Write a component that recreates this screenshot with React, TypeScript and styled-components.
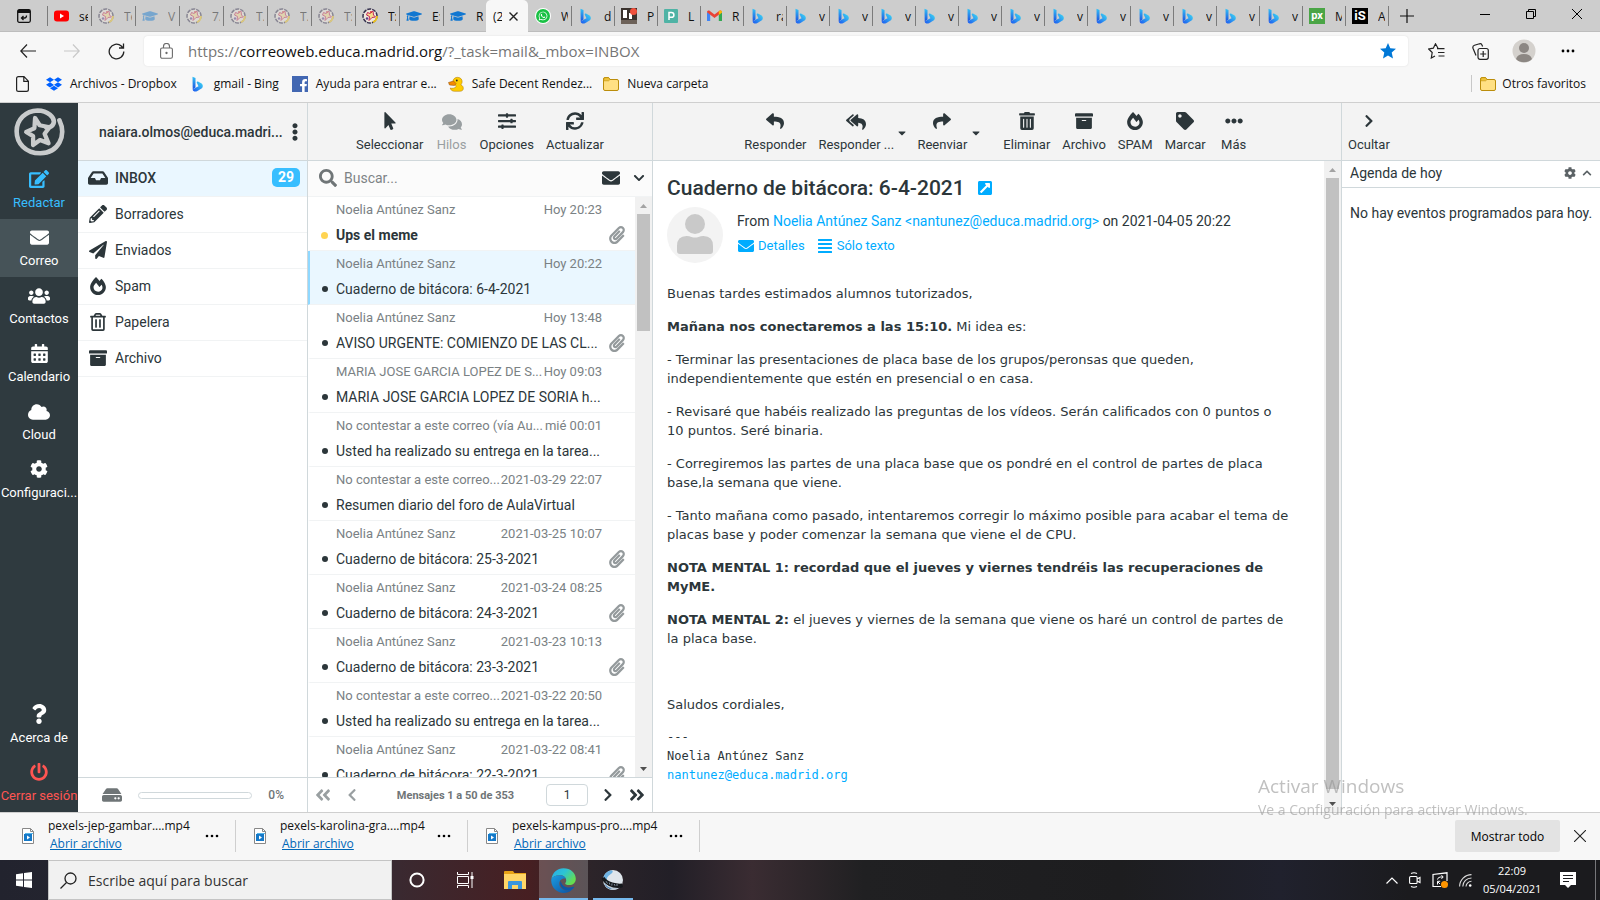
import React from "react";
import styled, { createGlobalStyle } from "styled-components";
import {
  FaEdit, FaEnvelope, FaUsers, FaCalendarAlt, FaCloud, FaCog, FaQuestion, FaPowerOff, FaInbox,
  FaPencilAlt, FaPaperPlane, FaFireAlt, FaRegTrashAlt, FaTrashAlt, FaArchive, FaComments,
  FaMousePointer, FaSlidersH, FaSync, FaSearch, FaChevronDown, FaChevronUp, FaChevronRight,
  FaChevronLeft, FaPaperclip, FaReply, FaReplyAll, FaShare, FaCaretDown, FaTag, FaEllipsisH,
  FaEllipsisV, FaExternalLinkSquareAlt, FaAlignJustify, FaHdd, FaAngleDoubleLeft,
  FaAngleDoubleRight, FaFacebookF, FaWhatsapp, FaDropbox, FaGraduationCap,
} from "react-icons/fa";

const ui = `"Open Sans", "Noto Sans", sans-serif`;
const roboto = `Roboto, "Liberation Sans", sans-serif`;
const line = "#d0d8db";
const soft = "#f1f3f4";
const ink = "#2c363a";
const blue = "#00acff";

const Global = createGlobalStyle`
  *, *::before, *::after { box-sizing: border-box; }
  body { margin: 0; background: #fff; }
  button, input { font: inherit; color: inherit; }
  button { background: none; border: 0; padding: 0; margin: 0; }
  a { text-decoration: none; color: inherit; }
  ul { list-style: none; margin: 0; padding: 0; }
  svg { display: block; flex: none; }
`;

const Screen = styled.div`
  height: 100vh;
  display: flex;
  flex-direction: column;
  overflow: hidden;
  font-family: ${ui};
  font-size: 12px;
  color: #111;
`;

/* ---------- browser chrome ---------- */

const TabStrip = styled.div`
  display: flex;
  height: 32px;
  background: #cdcdcd;
  border-bottom: 1px solid #bdbdbd;
`;
const TabActions = styled.button`
  width: 47px;
  display: grid;
  place-items: center;
`;
const Tab = styled.button<{ $wide?: boolean; $faded?: boolean; $bare?: boolean }>`
  width: ${(p) => (p.$wide ? 44 : 43)}px;
  height: 32px;
  display: flex;
  align-items: center;
  gap: 10px;
  padding: 0 3px 0 7px;
  overflow: hidden;
  position: relative;
  text-align: left;
  &::before {
    content: "";
    display: ${(p) => (p.$bare ? "none" : "block")};
    position: absolute;
    left: 0;
    top: 6px;
    height: 20px;
    width: 1px;
    background: #7b7b7b;
  }
  > * { opacity: ${(p) => (p.$faded ? 0.45 : 1)}; }
`;
const TabTitle = styled.span`
  flex: 1;
  min-width: 0;
  overflow: hidden;
  white-space: nowrap;
`;
const ActiveTab = styled.div`
  width: 42px;
  height: 32px;
  background: #f7f7f7;
  border-radius: 5px 5px 0 0;
  display: flex;
  align-items: center;
  gap: 7px;
  padding: 0 10px 0 7px;
`;
const TabEnd = styled.div`
  width: 1px;
  height: 20px;
  margin-top: 6px;
  background: #7b7b7b;
`;
const WindowControls = styled.div`
  margin-left: auto;
  display: flex;
  height: 28px;
`;
const WindowButton = styled.button`
  width: 46px;
  display: grid;
  place-items: center;
`;
const NewTab = styled.button`
  width: 36px;
  display: grid;
  place-items: center;
`;
const NavBar = styled.div`
  display: flex;
  align-items: center;
  height: 38px;
  background: #f7f7f7;
  padding: 0 6px;
`;
const NavButton = styled.button`
  width: 44px;
  height: 30px;
  display: grid;
  place-items: center;
`;
const Address = styled.label`
  flex: 1;
  margin: 0 6px;
  height: 30px;
  background: #fff;
  border-radius: 4px;
  box-shadow: 0 0 2px #ddd;
  display: flex;
  align-items: center;
  padding: 0 12px 0 16px;
  gap: 15px;
`;
const Url = styled.span`
  flex: 1;
  font-size: 15px;
  color: #767676;
  b { font-weight: 400; color: #111; }
`;
const NavEnd = styled.div`
  display: flex;
  padding-right: 4px;
`;
const Favorites = styled.nav`
  display: flex;
  align-items: center;
  height: 33px;
  background: #f7f7f7;
  border-bottom: 1px solid #cfcfcf;
  padding: 0 14px 5px 16px;
`;
const Favorite = styled.a<{ $gap: number }>`
  display: flex;
  align-items: center;
  gap: 8px;
  margin-right: ${(p) => p.$gap}px;
  white-space: nowrap;
`;
const OtherFavorites = styled(Favorite)`
  margin-left: auto;
  padding-left: 8px;
  border-left: 1px solid #c8c8c8;
  gap: 6px;
`;

/* ---------- mail application ---------- */

const Mail = styled.main`
  flex: 1;
  min-height: 0;
  display: grid;
  grid-template-columns: 78px 230px 345px minmax(0, 1fr) 258px;
  font-family: ${roboto};
  font-size: 14px;
  color: ${ink};
  background: #fff;
`;
const TaskMenu = styled.nav`
  background: #2f3a3f;
  display: flex;
  flex-direction: column;
`;
const Logo = styled.div`
  height: 58px;
  display: grid;
  place-items: center;
`;
const Task = styled.button<{ $tone?: string; $active?: boolean; $last?: boolean }>`
  height: 58px;
  display: flex;
  flex-direction: column;
  align-items: center;
  padding-top: 8px;
  gap: 5px;
  font-size: 13px;
  line-height: 18px;
  white-space: nowrap;
  color: ${(p) => p.$tone || "#fff"};
  background: ${(p) => (p.$active ? "#465358" : "transparent")};
  margin-top: ${(p) => (p.$last ? "auto" : "0")};
`;
const TaskIcon = styled.span`
  height: 20px;
  display: grid;
  place-items: center;
  font-size: 20px;
`;
const Column = styled.section`
  display: flex;
  flex-direction: column;
  min-width: 0;
  min-height: 0;
  border-right: 1px solid ${line};
  &:last-child { border-right: 0; }
`;
const Header = styled.header`
  flex: none;
  height: 58px;
  background: #f3f3f3;
  border-bottom: 1px solid ${line};
  display: flex;
  align-items: center;
`;
const Account = styled(Header)`
  padding: 0 3px 0 21px;
  justify-content: space-between;
  font-weight: 500;
`;
const Tools = styled(Header)<{ $left?: boolean }>`
  justify-content: ${(p) => (p.$left ? "flex-start" : "center")};
  padding-top: 2px;
  font-size: 13px;
`;
const Tool = styled.button<{ $muted?: boolean; $split?: boolean }>`
  min-width: 32px;
  width: ${(p) => (p.$split ? "75px" : "auto")};
  margin: 0 6px;
  display: flex;
  flex-direction: column;
  align-items: center;
  gap: 5px;
  line-height: 18px;
  white-space: nowrap;
  color: ${(p) => (p.$muted ? "#999fa1" : ink)};
  > span:last-child { align-self: ${(p) => (p.$split ? "flex-start" : "center")}; }
`;
const ToolIcon = styled.span`
  height: 19px;
  display: grid;
  place-items: center;
  font-size: 18px;
`;
const Split = styled.div<{ $end?: boolean }>`
  display: flex;
  margin-right: ${(p) => (p.$end ? 12 : 0)}px;
  ${Tool} { margin-right: 0; }
`;
const Caret = styled.button`
  width: 18px;
  height: 42px;
  display: grid;
  place-items: center;
  font-size: 12px;
`;
const Folder = styled.a<{ $active?: boolean }>`
  height: 36px;
  display: flex;
  align-items: center;
  padding: 0 7px 2px 9px;
  gap: 7px;
  border-bottom: 1px solid ${soft};
  background: ${(p) => (p.$active ? "#eaf7ff" : "#fff")};
  font-weight: ${(p) => (p.$active ? 500 : 400)};
`;
const FolderIcon = styled.span`
  width: 21px;
  display: grid;
  place-items: center;
  font-size: 18px;
`;
const Badge = styled.span`
  margin-left: auto;
  width: 28px;
  height: 19px;
  border-radius: 5px;
  background: #37beff;
  color: #fff;
  font-weight: 700;
  line-height: 19px;
  text-align: center;
`;
const Footer = styled.footer`
  flex: none;
  height: 35px;
  margin-top: auto;
  border-top: 1px solid ${line};
  display: flex;
  align-items: center;
  font-size: 11px;
  font-weight: 700;
  color: #6f7577;
`;
const Quota = styled(Footer)`
  padding: 0 23px 0 24px;
  gap: 16px;
  justify-content: space-between;
  font-size: 12px;
  font-weight: 500;
`;
const QuotaBar = styled.div`
  flex: 1;
  height: 7px;
  border: 1px solid ${line};
  border-radius: 4px;
`;
const SearchRow = styled.label`
  flex: none;
  height: 36px;
  display: flex;
  align-items: center;
  padding: 0 7px 1px 11px;
  gap: 7px;
  background: #fbfbfb;
  border-bottom: 1px solid ${soft};
  color: ${ink};
`;
const SearchInput = styled.input`
  flex: 1;
  min-width: 0;
  border: 0;
  padding: 0;
  background: transparent;
  outline: 0;
  &::placeholder { color: #7d8386; opacity: 1; }
`;
const Plain = styled.button`
  display: grid;
  place-items: center;
`;
const ListArea = styled.div`
  flex: 1;
  min-height: 0;
  display: flex;
`;
const MessageList = styled.ul`
  flex: 1;
  min-width: 0;
  overflow: hidden;
`;
const MessageRow = styled.li<{ $selected?: boolean }>`
  height: 54px;
  display: grid;
  grid-template-columns: 26px minmax(0, 1fr) 33px;
  grid-template-rows: 24px 28px;
  align-items: center;
  border-bottom: 1px solid ${soft};
  border-left: 2px solid ${(p) => (p.$selected ? "#8fd8ff" : "transparent")};
  background: ${(p) => (p.$selected ? "#eaf7ff" : "#fff")};
`;
const Meta = styled.div`
  grid-column: 2;
  display: flex;
  justify-content: space-between;
  font-size: 13px;
  color: #7a8184;
  white-space: nowrap;
`;
const Dot = styled.span<{ $unread?: boolean }>`
  justify-self: end;
  width: ${(p) => (p.$unread ? 7 : 6)}px;
  height: ${(p) => (p.$unread ? 7 : 6)}px;
  margin-right: 8px;
  border-radius: 50%;
  background: ${(p) => (p.$unread ? "#ffd452" : ink)};
`;
const SubjectLink = styled.a<{ $unread?: boolean }>`
  white-space: nowrap;
  font-weight: ${(p) => (p.$unread ? 700 : 400)};
`;
const Clip = styled.span`
  margin-left: 6px;
  color: #949a9c;
  font-size: 18px;
`;
const Scrollbar = styled.div`
  flex: none;
  width: 17px;
  background: #f1f1f1;
  display: flex;
  flex-direction: column;
  align-items: center;
`;
const ScrollArrow = styled.span<{ $down?: boolean }>`
  height: 17px;
  display: grid;
  place-items: center;
  margin-top: ${(p) => (p.$down ? "auto" : "0")};
  color: ${(p) => (p.$down ? "#505050" : "#a3a3a3")};
`;
const Thumb = styled.div<{ $share: string }>`
  width: 13px;
  height: ${(p) => p.$share};
  background: #c1c1c1;
`;
const Pager = styled(Footer)`
  padding: 0 6px;
  button { color: ${ink}; }
  button:disabled { color: #999fa1; }
`;
const PagerText = styled.span`
  flex: 1;
  padding-left: 6px;
  text-align: center;
  white-space: nowrap;
`;
const IconGroup = styled.div`
  display: flex;
  align-items: center;
  gap: 13px;
`;
const PageInput = styled.input`
  width: 42px;
  height: 22px;
  border: 1px solid ${line};
  border-radius: 4px;
  text-align: center;
  font-size: 12px;
  font-weight: 400;
  color: ${ink};
  padding: 0;
`;
const Reader = styled.article`
  flex: 1;
  min-width: 0;
  padding: 13px 14px 0;
`;
const Subject = styled.h1`
  display: flex;
  align-items: center;
  gap: 12px;
  margin: 0 0 5px;
  font-size: 21px;
  line-height: 28px;
  font-weight: 500;
  svg { font-size: 16px; color: ${blue}; }
`;
const Envelope = styled.div`
  display: flex;
  gap: 14px;
  margin-bottom: 21px;
  a { color: ${blue}; }
`;
const From = styled.div`
  line-height: 20px;
  padding-top: 4px;
`;
const Links = styled.div`
  display: flex;
  gap: 12px;
  margin-top: 6px;
  padding-left: 1px;
  font-size: 13px;
  line-height: 18px;
  a { display: flex; align-items: center; gap: 4px; }
  svg { font-size: 16px; }
`;
const Body = styled.div`
  font-family: "DejaVu Sans", sans-serif;
  font-size: 13px;
  line-height: 19px;
  p { margin: 0 0 14px; min-height: 19px; }
`;
const Signature = styled.div`
  font-family: "DejaVu Sans Mono", monospace;
  font-size: 12px;
  line-height: 19px;
  a { color: ${blue}; display: block; }
`;
const AgendaTitle = styled.div`
  height: 27px;
  display: flex;
  align-items: center;
  gap: 6px;
  padding: 0 8px 2px;
  border-bottom: 1px solid ${line};
  color: #5b6265;
  h2 { flex: 1; margin: 0; font-size: 14px; font-weight: 400; color: ${ink}; }
`;
const AgendaText = styled.p`
  margin: 0;
  padding: 15px 0 15px 8px;
  line-height: 20px;
`;

/* ---------- downloads and taskbar ---------- */

const Downloads = styled.div`
  flex: none;
  height: 48px;
  display: flex;
  align-items: center;
  background: #f7f7f7;
  border-top: 1px solid #cfcfcf;
  padding: 0 14px 1px 4px;
`;
const Download = styled.div`
  width: 232px;
  height: 32px;
  display: flex;
  align-items: center;
  padding: 0 16px 0 18px;
  gap: 14px;
  border-right: 1px solid #cfcfcf;
`;
const DownloadText = styled.div`
  flex: 1;
  min-width: 0;
  padding-bottom: 2px;
  line-height: 18px;
  white-space: nowrap;
  a { color: #0067b8; text-decoration: underline; padding-left: 2px; }
`;
const ShowAll = styled.button`
  margin-left: auto;
  margin-right: 14px;
  width: 105px;
  height: 32px;
  border-radius: 2px;
  background: #e3e3e3;
  color: #000;
  font-weight: 500;
`;
const Taskbar = styled.div`
  flex: none;
  height: 40px;
  display: flex;
  color: #fff;
  background: linear-gradient(90deg, #22232e 0%, #2a2731 20%, #3a2930 25%, #471f22 33%, #2c2429 37%, #221f27 42%, #3a2c32 47%, #202022 54%, #1d1d1f 70%, #20212d 80%, #1b1b1e 88%, #1b1b1e 100%);
`;
const TaskButton = styled.button<{ $active?: boolean; $running?: string }>`
  width: 49px;
  height: 40px;
  display: grid;
  place-items: center;
  background-color: ${(p) => (p.$active ? "rgba(255, 255, 255, 0.22)" : "transparent")};
  background-image: ${(p) => (p.$running ? "linear-gradient(#76b9ed, #76b9ed)" : "none")};
  background-repeat: no-repeat;
  background-position: bottom;
  background-size: ${(p) => p.$running || "0"} 2px;
`;
const StartButton = styled(TaskButton)`
  width: 48px;
`;
const SystemSearch = styled.label`
  width: 344px;
  background: #f1f1f1;
  border: 1px solid #c4c4c4;
  display: flex;
  align-items: center;
  gap: 11px;
  padding: 0 11px;
  color: #222;
`;
const SystemInput = styled.input`
  flex: 1;
  min-width: 0;
  border: 0;
  padding: 0;
  background: none;
  font-size: 14px;
  &::placeholder { color: #333; opacity: 1; }
`;
const Tray = styled.div`
  margin-left: auto;
  display: flex;
  align-items: center;
  gap: 11px;
  padding-right: 4px;
`;
const Clock = styled.time`
  width: 58px;
  margin-right: 8px;
  font-size: 11px;
  line-height: 18px;
  text-align: center;
`;
const DesktopEdge = styled.span`
  width: 1px;
  height: 40px;
  margin-left: 8px;
  background: #77777a;
`;
const Watermark = styled.aside`
  position: fixed;
  right: 66px;
  bottom: 80px;
  width: 276px;
  color: rgba(150, 150, 150, 0.6);
  font-size: 14px;
  line-height: 20px;
  white-space: nowrap;
  pointer-events: none;
  strong { display: block; font-size: 19px; line-height: 28px; font-weight: 400; }
`;

/* ---------- drawings ---------- */

const Bing = () => (
  <svg width="16" height="16" viewBox="0 0 16 16">
    <defs>
      <linearGradient id="bingA" x1="0" y1="0" x2="0" y2="1">
        <stop offset="0" stopColor="#35c1f5" /><stop offset="1" stopColor="#1b4fe0" />
      </linearGradient>
      <linearGradient id="bingB" x1="0" y1="1" x2="1" y2="0">
        <stop offset="0" stopColor="#1b56f0" /><stop offset="1" stopColor="#3fdcf2" />
      </linearGradient>
    </defs>
    <path d="M2.500.8 5.500 1.900v9.600L2.700 13.600z" fill="url(#bingA)" />
    <path d="M2.700 13.400 6.500 11.300l2-1-1.700-3.600c-.3-.9.3-1.500 1.200-1.100l3.200 1.600c1.800 1 2.200 3.500.7 5.100L7 15.200c-1.900 1-4.200.1-4.300-1.800z" fill="url(#bingB)" />
  </svg>
);
const Moodle = () => (
  <svg width="16" height="16" viewBox="0 0 16 16">
    <circle cx="8" cy="8" r="7" fill="#efe8dd" stroke="#34304e" strokeWidth="1.500" strokeDasharray="4 1" />
    <path d="M11 14.300A7 7 0 0 0 15 8" stroke="#f0c419" strokeWidth="1.800" fill="none" />
    <path d="m5.500 4.500 2.500 1 3-2.500.5 4 2 2-3.500.5L7 12.500l.5-4-3-1.500z" fill="#f7dc8a" stroke="#c2255c" strokeWidth="1" />
    <circle cx="5" cy="10.500" r="1.200" fill="#5a3d8a" />
    <circle cx="9" cy="4" r="1" fill="#d32f2f" />
  </svg>
);
const YouTube = () => (
  <svg width="15" height="16" viewBox="0 0 15 16"><rect y="2.500" width="15" height="11" rx="3" fill="#f00" /><path d="M6 5.500v5L10 8z" fill="#fff" /></svg>
);
const Cap = () => <FaGraduationCap size={16} color="#1177d1" />;
const WhatsApp = () => (
  <svg width="16" height="16" viewBox="0 0 16 16"><circle cx="8" cy="8" r="8" fill="#fff" /><circle cx="8" cy="8" r="7" fill="#19c144" /><FaWhatsapp x="3" y="3" size={10} color="#fff" /></svg>
);
const Photo = () => (
  <svg width="16" height="16" viewBox="0 0 16 16"><rect width="16" height="16" fill="#3a322d" /><path d="M2 2h4v8H2zM8 5h3v6H8z" fill="#fff" /><path d="M0 12h16v4H0z" fill="#6d6259" /><circle cx="12.500" cy="3.500" r="3.500" fill="#f0503c" /></svg>
);
const Pexel = () => (
  <svg width="14" height="16" viewBox="0 0 14 16"><rect y="1" width="14" height="14" rx="1" fill="#4fb3a5" /><path d="M5 12V4.500h2.500a2.400 2.400 0 0 1 0 4.800H5" fill="none" stroke="#fff" strokeWidth="1.500" /></svg>
);
const Gmail = () => (
  <svg width="15" height="16" viewBox="0 0 15 16">
    <path d="M0 4v9h3.200V6z" fill="#4285f4" /><path d="M15 4v9h-3.200V6z" fill="#34a853" />
    <path d="M0 4.200C0 2.700 1.700 2 2.900 2.900L7.500 6.500l4.600-3.600c1.200-.9 2.900-.2 2.900 1.300L7.500 10z" fill="#ea4335" />
    <path d="M11.800 3.200v3.700L15 4.400C15 2.700 13.300 2 11.800 3.200z" fill="#fbbc04" />
  </svg>
);
const TileIcon = styled.span<{ $bg: string; $size?: number }>`
  flex: none;
  width: 16px;
  height: 16px;
  background: ${(p) => p.$bg};
  color: #fff;
  font: 700 ${(p) => p.$size || 11}px/15px ${roboto};
  text-align: center;
`;
const FolderPic = () => (
  <svg width="16" height="14" viewBox="0 0 16 14"><path d="M.5 2Q.5.5 2 .5h3.500l1.500 2h7Q15.500 2.500 15.500 4v8q0 1.500-1.500 1.500H2Q.5 13.500.5 12z" fill="#ffe083" stroke="#bb8d0b" /><path d="M.8 3.800h4.700l1.500-1.300-1.300-1.800H2Q.8.800.8 2z" fill="#efc33a" stroke="#bb8d0b" strokeWidth=".6" /></svg>
);
const Duck = () => (
  <svg width="16" height="16" viewBox="0 0 16 16">
    <path d="M5 5.200C5.200 2.800 7.200 1.200 9.700 1.300c3 .1 4.800 2.400 4.400 5-.1 1-.7 1.800-1.200 2.500 1.600.8 2.500 2 2.400 3.700-.1 1.800-1.300 2.800-3.500 2.800H6.500c-2.300 0-3.700-1.200-4.300-3.300 2 .7 4.500.3 6-1.500z" fill="#fc0" stroke="#a87400" strokeWidth=".5" />
    <path d="M.5 6.500 5.500 5l2.500 2.500-1.500 2-5-.5z" fill="#f58a00" stroke="#8a4a00" strokeWidth=".5" />
    <circle cx="8.800" cy="4.500" r=".9" fill="#222" />
  </svg>
);
const PageIcon = () => (
  <svg width="13" height="16" viewBox="0 0 13 16" fill="none" stroke="#222" strokeWidth="1.200"><path d="M2.500.6H8l4.400 4.600v8.300q0 1.900-1.900 1.900h-8Q.6 15.400.6 13.500v-11Q.6.6 2.500.6zM7.800.8v4.600h4.400" /></svg>
);
const School = () => (
  <svg width="51" height="48" viewBox="40 25 155 145" fill="none" stroke="#c9cbcc" strokeLinecap="round" strokeLinejoin="round">
    <path d="M178 62C200 108 176 161 120 162 74 162 48 130 48 95 48 60 75 33 112 32c30 0 54 22 48 40-4 10-12 12-22 12" strokeWidth="14" />
    <path d="m104 55 14 22 30 6-15 20 12 29-26-10-21 15v-27l-21-13 25-11z" strokeWidth="13" />
  </svg>
);
const Avatar = () => (
  <svg width="56" height="56" viewBox="0 0 56 56"><circle cx="28" cy="28" r="28" fill="#f3f3f3" /><g fill="#c9c9c9"><circle cx="28" cy="17" r="10" /><path d="M10 44v-5q0-10 9.500-10 3 0 5 1 3.500 1 7 0 2-1 5-1Q46 29 46 39v5q0 3-3 3H13q-3 0-3-3z" /></g></svg>
);
const Triangle = ({ down }: { down?: boolean }) => (
  <svg width="7" height="4" viewBox="0 0 7 4"><path d={down ? "M0 0h7L3.500 4z" : "M0 4h7L3.500 0z"} fill="currentColor" /></svg>
);
const MediaFile = () => (
  <svg width="12" height="16" viewBox="0 0 12 16"><path d="M.5.5h8l3 3v12H.5z" fill="#fff" stroke="#888" /><path d="M8.500.5v3h3" fill="none" stroke="#888" /><path d="M3 5h8v1H3z" fill="#56b5ea" /><rect x="2" y="6" width="8" height="7" fill="#1579c8" /><path d="M5 7.500v4l3-2z" fill="#fff" /></svg>
);
const Explorer = () => (
  <svg width="22" height="18" viewBox="0 0 22 18"><path d="M0 1q0-1 1-1h8l1.500 2H22v16H0z" fill="#e8a317" /><path d="M0 3h22v15H0z" fill="#ffd667" /><path d="M4 18v-7q0-1 1-1h12q1 0 1 1v7h-4v-4H8v4z" fill="#3a96dd" /></svg>
);
const Edge = () => (
  <svg width="25" height="25" viewBox="0 0 24 24">
    <defs>
      <linearGradient id="edgeTop" x1="0" y1="0" x2="1" y2=".6"><stop offset="0" stopColor="#28a8ea" /><stop offset=".5" stopColor="#2cc4d4" /><stop offset="1" stopColor="#66dd4e" /></linearGradient>
      <linearGradient id="edgeLow" x1="0" y1="0" x2="1" y2="1"><stop offset="0" stopColor="#1b9de2" /><stop offset="1" stopColor="#0d4f9e" /></linearGradient>
    </defs>
    <path d="M.4 10.500C1.300 4.500 6 .2 12 .2 19 .2 23.800 5 23.800 10.200c0 3.800-2.800 6.200-6.400 6.200-2.600 0-3.800-.9-3.800-1.600 0-.6 1-1 1-2.900C14.600 9 12 7 8.500 7 4.500 7 1.500 8.500.4 10.500z" fill="url(#edgeTop)" />
    <path d="M.4 10.500C1.500 8.500 4.500 7 8.500 7c3 0 5 1.400 5.800 3.200-4-.8-6.300 1.700-6.300 4.800 0 4 4 7 8.500 6.300 2.500-.4 4-1.300 5.500-2.500C20 22 16.500 23.900 12.500 23.900 5.500 23.900.2 18.500.2 12z" fill="url(#edgeLow)" />
    <path d="M9.500 12c-1.800 3 0 7.500 4 9 3 1 6.500 0 8.600-2.300.4-.5 0-1-.6-.7-1.200.5-2.600.8-4 .8-4.500 0-8-3-8-6.800z" fill="#0b57a8" />
  </svg>
);
const Globe = () => (
  <svg width="23" height="22" viewBox="0 0 23 22">
    <circle cx="12" cy="11" r="10" fill="#dfe6ec" />
    <path d="M2 12Q2 3 10.500 1.200q3 1-1 4Q5 8 6 12z" fill="#6fb4e4" />
    <path d="M4 17q4 1 8 1 4 0 8-1-3 4-8 4t-8-4z" fill="#b9c7d3" />
    <path d="M3 14q3 4 8 6-5 0-8-6z" fill="#2a73b8" />
    <path d="m.5 9.500 3-1.500q2 3.500 8 5.500 5 1.500 9.500 1l1 3.500-2 .8Q13 19.500 8 17q-5-2.500-7.500-7.500z" fill="#15181c" />
    <path d="m5 12.200 1.500 2.300m1.800-.9.500 2m2.200-1.200-.2 2.200m2.400-1.600.8 1.800m2-1.800v2" stroke="#9ab" strokeWidth=".8" />
  </svg>
);

/* ---------- data ---------- */

type TabSpec = [React.FC, string, boolean?];
const leftTabs: TabSpec[] = [
  [YouTube, "se"], [Moodle, "Te", true], [Cap, "V", true], [Moodle, "7.", true], [Moodle, "T.", true],
  [Moodle, "T.", true], [Moodle, "T:", true], [Moodle, "T:"], [Cap, "E:"], [Cap, "R"],
];
const PxTile = () => <TileIcon $bg="#4aa546">px</TileIcon>;
const IsTile = () => <TileIcon $bg="#000" $size={13}>iS</TileIcon>;
const rightTabs: TabSpec[] = [
  [WhatsApp, "W"], [Bing, "d"], [Photo, "P"], [Pexel, "L"], [Gmail, "R"], [Bing, "ra"],
  ...Array.from({ length: 12 }, () => [Bing, "v"] as TabSpec),
  [PxTile, "M"], [IsTile, "A"],
];

const folders: [React.ReactNode, string, number?][] = [
  [<FaInbox size={20} />, "INBOX", 29],
  [<FaPencilAlt />, "Borradores"],
  [<FaPaperPlane />, "Enviados"],
  [<FaFireAlt />, "Spam"],
  [<FaRegTrashAlt />, "Papelera"],
  [<FaArchive />, "Archivo"],
];

const messages = [
  { from: "Noelia Antúnez Sanz", date: "Hoy 20:23", subject: "Ups el meme", clip: true, unread: true },
  { from: "Noelia Antúnez Sanz", date: "Hoy 20:22", subject: "Cuaderno de bitácora: 6-4-2021", selected: true },
  { from: "Noelia Antúnez Sanz", date: "Hoy 13:48", subject: "AVISO URGENTE: COMIENZO DE LAS CL...", clip: true },
  { from: "MARIA JOSE GARCIA LOPEZ DE S...", date: "Hoy 09:03", subject: "MARIA JOSE GARCIA LOPEZ DE SORIA h..." },
  { from: "No contestar a este correo (vía Au...", date: "mié 00:01", subject: "Usted ha realizado su entrega en la tarea..." },
  { from: "No contestar a este correo...", date: "2021-03-29 22:07", subject: "Resumen diario del foro de AulaVirtual" },
  { from: "Noelia Antúnez Sanz", date: "2021-03-25 10:07", subject: "Cuaderno de bitácora: 25-3-2021", clip: true },
  { from: "Noelia Antúnez Sanz", date: "2021-03-24 08:25", subject: "Cuaderno de bitácora: 24-3-2021", clip: true },
  { from: "Noelia Antúnez Sanz", date: "2021-03-23 10:13", subject: "Cuaderno de bitácora: 23-3-2021", clip: true },
  { from: "No contestar a este correo...", date: "2021-03-22 20:50", subject: "Usted ha realizado su entrega en la tarea..." },
  { from: "Noelia Antúnez Sanz", date: "2021-03-22 08:41", subject: "Cuaderno de bitácora: 22-3-2021", clip: true },
];

const files = ["pexels-jep-gambar....mp4", "pexels-karolina-gra....mp4", "pexels-kampus-pro....mp4"];

const TaskItem = ({ icon, label, ...rest }: { icon: React.ReactNode; label: string; $tone?: string; $active?: boolean; $last?: boolean }) => (
  <Task {...rest}><TaskIcon>{icon}</TaskIcon>{label}</Task>
);
const ToolItem = ({ icon, label, ...rest }: { icon: React.ReactNode; label: string; $muted?: boolean; $split?: boolean }) => (
  <Tool {...rest}><ToolIcon>{icon}</ToolIcon><span>{label}</span></Tool>
);
const TabItem = ({ spec, wide, bare }: { spec: TabSpec; wide?: boolean; bare?: boolean }) => {
  const [Icon, title, faded] = spec;
  return <Tab $wide={wide} $faded={faded} $bare={bare}><Icon /><TabTitle>{title}</TabTitle></Tab>;
};

function Browser() {
  return (
    <>
      <TabStrip>
        <TabActions aria-label="Acciones de pestañas">
          <svg width="14" height="14" viewBox="0 0 14 14" fill="none" stroke="#111" strokeWidth="1.300"><rect x=".7" y=".7" width="12.600" height="12.600" rx="1.500" /><path d="M1 2.500h12" strokeWidth="3" /><path d="M9.500 6.500q0 2.500-2 2.500H5m1.500-2L4.500 9l2 2" /></svg>
        </TabActions>
        {leftTabs.map((t, i) => <TabItem key={i} spec={t} wide={i < 9} />)}
        <ActiveTab>
          <TabTitle>(2</TabTitle>
          <Plain aria-label="Cerrar pestaña"><svg width="9" height="9" viewBox="0 0 9 9" stroke="#222" strokeWidth="1.400"><path d="m.5.5 8 8m0-8-8 8" /></svg></Plain>
        </ActiveTab>
        {rightTabs.map((t, i) => <TabItem key={i} spec={t} bare={i === 0} />)}
        <TabEnd />
        <NewTab aria-label="Nueva pestaña"><svg width="14" height="14" viewBox="0 0 14 14" stroke="#111" strokeWidth="1.200"><path d="M7 0v14M0 7h14" /></svg></NewTab>
        <WindowControls>
          <WindowButton aria-label="Minimizar"><svg width="10" height="10" viewBox="0 0 10 10"><path d="M0 5h10v1H0z" /></svg></WindowButton>
          <WindowButton aria-label="Restaurar"><svg width="10" height="10" viewBox="0 0 10 10" fill="none" stroke="#000"><path d="M.5 2.500h7v7h-7zM2.500 2.500v-2h7v7h-2" /></svg></WindowButton>
          <WindowButton aria-label="Cerrar"><svg width="10" height="10" viewBox="0 0 10 10" stroke="#000"><path d="m0 0 10 10m0-10L0 10" /></svg></WindowButton>
        </WindowControls>
      </TabStrip>
      <NavBar>
        <NavButton aria-label="Atrás"><svg width="16" height="14" viewBox="0 0 16 14" fill="none" stroke="#222" strokeWidth="1.200"><path d="M16 7H1m6-6.500L.8 7 7 13.500" /></svg></NavButton>
        <NavButton aria-label="Adelante"><svg width="16" height="14" viewBox="0 0 16 14" fill="none" stroke="#c8c8c8" strokeWidth="1.200"><path d="M0 7h15M9 .5 15.200 7 9 13.500" /></svg></NavButton>
        <NavButton aria-label="Actualizar"><svg width="17" height="17" viewBox="0 0 17 17" fill="none" stroke="#222" strokeWidth="1.300"><path d="M15.800 8.500a7.300 7.300 0 1 1-2.500-5.500l1.700 2M15.500.5V5H11" /></svg></NavButton>
        <Address>
          <svg width="13" height="16" viewBox="0 0 13 16" fill="none" stroke="#6b6b6b" strokeWidth="1.100"><rect x=".6" y="5" width="11.800" height="10.300" rx="1.500" /><path d="M3.500 5V3.500a3 3 0 0 1 6 0V5" /><circle cx="6.500" cy="10" r=".6" fill="#6b6b6b" /></svg>
          <Url>https://<b>correoweb.educa.madrid.org</b>/?_task=mail&amp;_mbox=INBOX</Url>
          <Plain aria-label="Favorito"><svg width="16" height="16" viewBox="0 0 16 16"><path d="m8 0 2.300 5.200 5.700.6-4.300 3.800L13 15.500 8 12.500l-5 3 1.300-5.900L0 5.800l5.700-.6z" fill="#0078d7" /></svg></Plain>
        </Address>
        <NavEnd>
          <NavButton aria-label="Favoritos"><svg width="17" height="16" viewBox="0 0 17 16" fill="none" stroke="#222" strokeWidth="1.200"><path d="M10 5.200 7.500.8 5.300 5.200.7 6l3.500 3.500-.9 5.500L7 13M9 5.600h7.500M10 9.500h6.500M10.500 13h6" /></svg></NavButton>
          <NavButton aria-label="Colecciones"><svg width="17" height="17" viewBox="0 0 17 17" fill="none" stroke="#222" strokeWidth="1.200"><rect x="6" y="5.500" width="10.300" height="10.800" rx="2" /><path d="M11.200 8v6M8.200 11h6M4 12.500 1 5.200Q.3 3 2.500 2.300L7.500.8Q9.500.3 10 2l.6 1.500" /></svg></NavButton>
          <NavButton aria-label="Perfil"><svg width="24" height="24" viewBox="0 0 24 24"><circle cx="12" cy="12" r="11.500" fill="#d4d1cd" /><circle cx="12" cy="9" r="5" fill="#8c8783" /><path d="M4 20q1.500-5 8-5t8 5a11.500 11.500 0 0 1-16 0z" fill="#8c8783" /></svg></NavButton>
          <NavButton aria-label="Más"><svg width="14" height="4" viewBox="0 0 14 4"><circle cx="2" cy="2" r="1.400" /><circle cx="7" cy="2" r="1.400" /><circle cx="12" cy="2" r="1.400" /></svg></NavButton>
        </NavEnd>
      </NavBar>
      <Favorites>
        <Favorite href="#" $gap={17} aria-label="Página"><PageIcon /></Favorite>
        <Favorite href="#" $gap={13}><FaDropbox size={16} color="#0061ff" />Archivos - Dropbox</Favorite>
        <Favorite href="#" $gap={13}><Bing />gmail - Bing</Favorite>
        <Favorite href="#" $gap={11}>
          <svg width="16" height="16" viewBox="0 0 16 16"><rect width="16" height="16" fill="#4267b2" /><FaFacebookF x="5" y="3" size={13} color="#fff" /></svg>
          Ayuda para entrar e...
        </Favorite>
        <Favorite href="#" $gap={11}><Duck />Safe Decent Rendez...</Favorite>
        <Favorite href="#" $gap={0}><FolderPic />Nueva carpeta</Favorite>
        <OtherFavorites href="#" $gap={0}><FolderPic />Otros favoritos</OtherFavorites>
      </Favorites>
    </>
  );
}

export default function App() {
  return (
    <Screen>
      <Global />
      <Browser />
      <Mail>
        <TaskMenu>
          <Logo><School /></Logo>
          <TaskItem icon={<FaEdit />} label="Redactar" $tone="#37beff" />
          <TaskItem icon={<FaEnvelope size={19} />} label="Correo" $active />
          <TaskItem icon={<FaUsers size={22} />} label="Contactos" />
          <TaskItem icon={<FaCalendarAlt size={19} />} label="Calendario" />
          <TaskItem icon={<FaCloud size={22} />} label="Cloud" />
          <TaskItem icon={<FaCog size={18} />} label="Configuraci..." />
          <TaskItem icon={<FaQuestion />} label="Acerca de" $last />
          <TaskItem icon={<FaPowerOff size={18} />} label="Cerrar sesión" $tone="#ff5552" />
        </TaskMenu>

        <Column>
          <Account>naiara.olmos@educa.madri...<Plain aria-label="Opciones de carpetas"><FaEllipsisV size={18} /></Plain></Account>
          <nav>
            {folders.map(([icon, name, count]) => (
              <Folder key={name} href="#" $active={!!count}>
                <FolderIcon>{icon}</FolderIcon>{name}{count && <Badge>{count}</Badge>}
              </Folder>
            ))}
          </nav>
          <Quota><FaHdd size={20} /><QuotaBar />0%</Quota>
        </Column>

        <Column>
          <Tools>
            <ToolItem icon={<FaMousePointer />} label="Seleccionar" />
            <ToolItem icon={<FaComments size={20} />} label="Hilos" $muted />
            <ToolItem icon={<FaSlidersH />} label="Opciones" />
            <ToolItem icon={<FaSync />} label="Actualizar" />
          </Tools>
          <SearchRow>
            <FaSearch size={18} color="#6f7577" />
            <SearchInput placeholder="Buscar..." aria-label="Buscar" />
            <IconGroup>
              <Plain aria-label="Filtro"><FaEnvelope size={18} /></Plain>
              <Plain aria-label="Opciones de búsqueda"><FaChevronDown size={12} /></Plain>
            </IconGroup>
          </SearchRow>
          <ListArea>
            <MessageList>
              {messages.map((m) => (
                <MessageRow key={m.date} $selected={m.selected}>
                  <Meta><span>{m.from}</span><span>{m.date}</span></Meta>
                  <span />
                  <Dot $unread={m.unread} />
                  <SubjectLink href="#" $unread={m.unread}>{m.subject}</SubjectLink>
                  <Clip>{m.clip && <FaPaperclip />}</Clip>
                </MessageRow>
              ))}
            </MessageList>
            <Scrollbar>
              <ScrollArrow><Triangle /></ScrollArrow>
              <Thumb $share="117px" />
              <ScrollArrow $down><Triangle down /></ScrollArrow>
            </Scrollbar>
          </ListArea>
          <Pager>
            <IconGroup>
              <Plain disabled aria-label="Primera página"><FaAngleDoubleLeft size={18} /></Plain>
              <Plain disabled aria-label="Página anterior"><FaChevronLeft size={14} /></Plain>
            </IconGroup>
            <PagerText>Mensajes 1 a 50 de 353</PagerText>
            <IconGroup>
              <PageInput defaultValue="1" aria-label="Página" />
              <Plain aria-label="Página siguiente"><FaChevronRight size={14} /></Plain>
              <Plain aria-label="Última página"><FaAngleDoubleRight size={18} /></Plain>
            </IconGroup>
          </Pager>
        </Column>

        <Column>
          <Tools>
            <ToolItem icon={<FaReply />} label="Responder" />
            <Split>
              <ToolItem icon={<FaReplyAll size={20} />} label="Responder ..." $split />
              <Caret aria-label="Opciones de respuesta"><FaCaretDown /></Caret>
            </Split>
            <Split $end>
              <ToolItem icon={<FaShare />} label="Reenviar" />
              <Caret aria-label="Opciones de reenvío"><FaCaretDown /></Caret>
            </Split>
            <ToolItem icon={<FaTrashAlt />} label="Eliminar" />
            <ToolItem icon={<FaArchive />} label="Archivo" />
            <ToolItem icon={<FaFireAlt />} label="SPAM" />
            <ToolItem icon={<FaTag />} label="Marcar" />
            <ToolItem icon={<FaEllipsisH />} label="Más" />
          </Tools>
          <ListArea>
            <Reader>
              <Subject>Cuaderno de bitácora: 6-4-2021<a href="#" aria-label="Abrir en ventana nueva"><FaExternalLinkSquareAlt /></a></Subject>
              <Envelope>
                <Avatar />
                <div>
                  <From>From <a href="#">Noelia Antúnez Sanz &lt;nantunez@educa.madrid.org&gt;</a> on 2021-04-05 20:22</From>
                  <Links>
                    <a href="#"><FaEnvelope />Detalles</a>
                    <a href="#"><FaAlignJustify />Sólo texto</a>
                  </Links>
                </div>
              </Envelope>
              <Body>
                <p>Buenas tardes estimados alumnos tutorizados,</p>
                <p><b>Mañana nos conectaremos a las 15:10.</b> Mi idea es:</p>
                <p>- Terminar las presentaciones de placa base de los grupos/peronsas que queden,<br />independientemente que estén en presencial o en casa.</p>
                <p>- Revisaré que habéis realizado las preguntas de los vídeos. Serán calificados con 0 puntos o<br />10 puntos. Seré binaria.</p>
                <p>- Corregiremos las partes de una placa base que os pondré en el control de partes de placa<br />base,la semana que viene.</p>
                <p>- Tanto mañana como pasado, intentaremos corregir lo máximo posible para acabar el tema de<br />placas base y poder comenzar la semana que viene el de CPU.</p>
                <p><b>NOTA MENTAL 1: recordad que el jueves y viernes tendréis las recuperaciones de<br />MyME.</b></p>
                <p><b>NOTA MENTAL 2:</b> el jueves y viernes de la semana que viene os haré un control de partes de<br />la placa base.</p>
                <p />
                <p>Saludos cordiales,</p>
                <Signature>---<br />Noelia Antúnez Sanz<a href="#">nantunez@educa.madrid.org</a></Signature>
              </Body>
            </Reader>
            <Scrollbar>
              <ScrollArrow><Triangle /></ScrollArrow>
              <Thumb $share="calc(100% - 40px)" />
              <ScrollArrow $down><Triangle down /></ScrollArrow>
            </Scrollbar>
          </ListArea>
        </Column>

        <Column>
          <Tools $left><ToolItem icon={<FaChevronRight size={14} />} label="Ocultar" /></Tools>
          <AgendaTitle>
            <h2>Agenda de hoy</h2>
            <Plain aria-label="Ajustes de agenda"><FaCog size={12} /></Plain>
            <Plain aria-label="Plegar agenda"><FaChevronUp size={10} /></Plain>
          </AgendaTitle>
          <AgendaText>No hay eventos programados para hoy.</AgendaText>
        </Column>
      </Mail>

      <Downloads>
        {files.map((f) => (
          <Download key={f}>
            <MediaFile />
            <DownloadText><div>{f}</div><a href="#">Abrir archivo</a></DownloadText>
            <Plain aria-label="Más opciones"><svg width="14" height="4" viewBox="0 0 14 4"><circle cx="2" cy="2" r="1.300" /><circle cx="7" cy="2" r="1.300" /><circle cx="12" cy="2" r="1.300" /></svg></Plain>
          </Download>
        ))}
        <ShowAll>Mostrar todo</ShowAll>
        <Plain aria-label="Cerrar descargas"><svg width="12" height="12" viewBox="0 0 12 12" stroke="#222" strokeWidth="1.100"><path d="m0 0 12 12m0-12L0 12" /></svg></Plain>
      </Downloads>

      <Taskbar>
        <StartButton aria-label="Inicio"><svg width="16" height="16" viewBox="0 0 16 16" fill="#fff"><path d="M0 2.200 7 1.200v6.300H0zM8 1.100 16 0v7.500H8zM0 8.500h7v6.300l-7-1zM8 8.500h8V16l-8-1.100z" /></svg></StartButton>
        <SystemSearch>
          <svg width="17" height="17" viewBox="0 0 17 17" fill="none" stroke="#222" strokeWidth="1.300"><circle cx="10.500" cy="6.500" r="5.500" /><path d="M6.500 10.500.5 16.500" /></svg>
          <SystemInput placeholder="Escribe aquí para buscar" aria-label="Buscar en el equipo" />
        </SystemSearch>
        <TaskButton aria-label="Cortana"><svg width="16" height="16" viewBox="0 0 16 16" fill="none" stroke="#fff" strokeWidth="2"><circle cx="8" cy="8" r="6.600" /></svg></TaskButton>
        <TaskButton aria-label="Vista de tareas"><svg width="17" height="16" viewBox="0 0 17 16" fill="none" stroke="#fff"><path d="M.5 0v2.500h11V0M.5 16v-2.500h11V16M.5 4.500h11v7H.5zM15 0v16" /><path d="M13.500 4h3v3h-3z" fill="#fff" stroke="none" /></svg></TaskButton>
        <TaskButton aria-label="Explorador"><Explorer /></TaskButton>
        <TaskButton aria-label="Edge" $active $running="100%"><Edge /></TaskButton>
        <TaskButton aria-label="OpenShot" $running="40px"><Globe /></TaskButton>
        <Tray>
          <svg width="12" height="7" viewBox="0 0 12 7" fill="none" stroke="#fff" strokeWidth="1.200"><path d="m.5 6.500 5.500-5.500 5.500 5.500" /></svg>
          <svg width="12" height="16" viewBox="0 0 12 16" fill="none" stroke="#fff" strokeWidth="1.100"><rect x=".6" y="4.500" width="7.500" height="7" rx="1" /><path d="m8 7 3-1.500v5L8 9M2 1.500q3-1.500 6 0M2 14.500q3 1.500 6 0" /></svg>
          <svg width="16" height="16" viewBox="0 0 16 16" fill="none" stroke="#fff" strokeWidth="1.200"><path d="M15 9V.8L1 2.500v12h8" /><path d="M5.500 7.500q.5-2.500 3-2.500H11M9.500 3.200 11.200 5 9.500 6.800M5.500 12.500V9.300h2.700M5.500 9.500 8 12" strokeWidth="1" /><circle cx="12.500" cy="12.500" r="3.500" fill="#ff9500" stroke="none" /></svg>
          <svg width="13" height="13" viewBox="0 0 13 13" fill="none" stroke="#ddd" strokeWidth="1.100"><path d="M.6 12.500A12 12 0 0 1 12.500.6M3.800 12.500A8.700 8.700 0 0 1 12.500 4M7 12.500A5.500 5.500 0 0 1 12.500 7.300" /><circle cx="11.200" cy="11.500" r="1.300" fill="#fff" stroke="none" /></svg>
          <Clock>22:09<br />05/04/2021</Clock>
          <svg width="16" height="16" viewBox="0 0 16 16"><path d="M0 0h16v13h-5l-3 3-3-3H0z" fill="#fff" /><path d="M3 3.500h10M3 6.500h10M3 9.500h6" stroke="#1b1b1e" /></svg>
          <DesktopEdge />
        </Tray>
      </Taskbar>
      <Watermark><strong>Activar Windows</strong>Ve a Configuración para activar Windows.</Watermark>
    </Screen>
  );
}
